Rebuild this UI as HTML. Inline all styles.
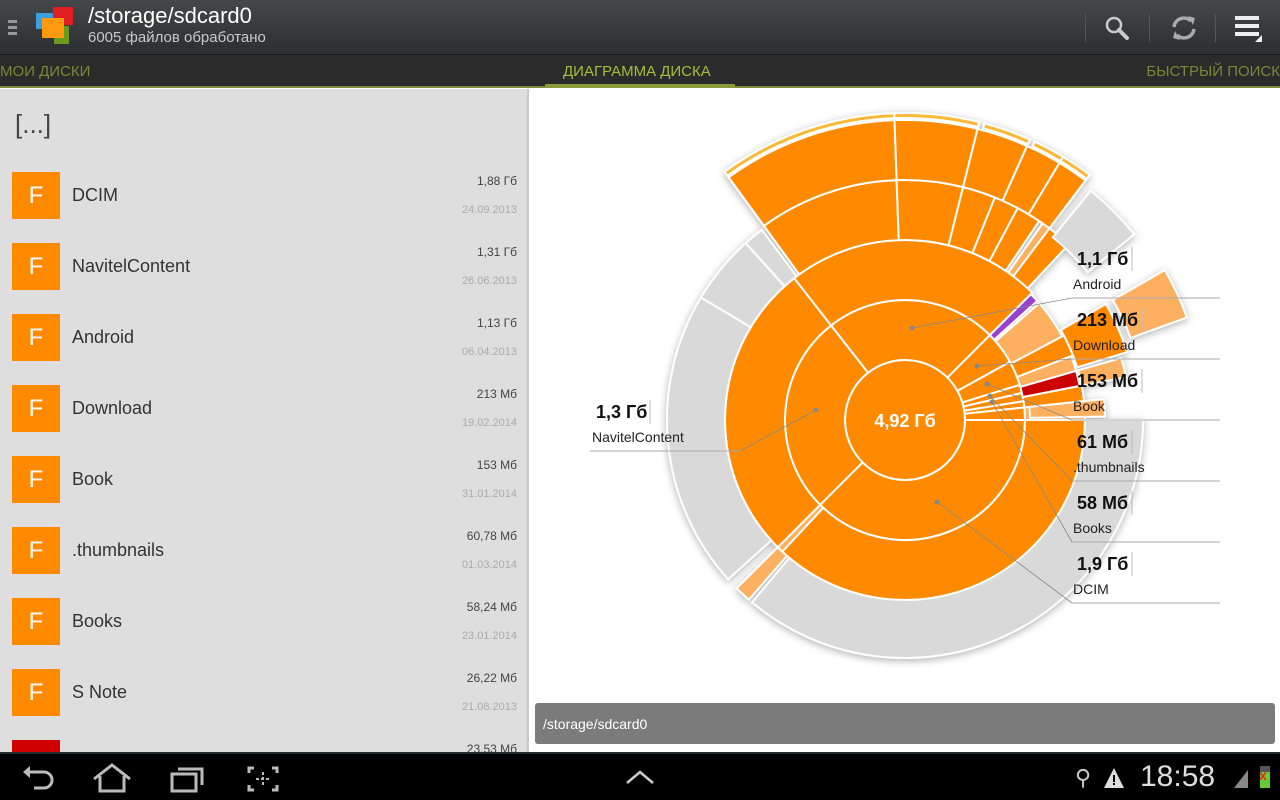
<!DOCTYPE html>
<html><head><meta charset="utf-8">
<style>
*{margin:0;padding:0;box-sizing:border-box}
body{width:1280px;height:800px;overflow:hidden;background:#fff;font-family:"Liberation Sans","DejaVu Sans",sans-serif;position:relative}
#top{position:absolute;left:0;top:0;width:1280px;height:55px;background:linear-gradient(#44484b,#2c2f31);border-bottom:1px solid #1a1a1a}
#tabs{position:absolute;left:0;top:55px;width:1280px;height:33px;background:#2b2b2b;border-bottom:2px solid #7d8a3c}
.tab{position:absolute;top:8px;font-size:15px;color:#7a8638}
#left{position:absolute;left:0;top:89px;width:529px;height:663px;background:#dedede;border-right:2px solid #c8c8c8;overflow:hidden}
.row{position:absolute;left:0;width:528px;height:71px}
.ic{position:absolute;left:12px;top:0;width:48px;height:47px;background:#ff8a00;color:#fff;font-size:24px;text-align:center;line-height:47px}
.nm{position:absolute;left:72px;top:13px;font-size:18px;color:#333}
.sz{position:absolute;right:11px;top:2px;font-size:12px;color:#444}
.dt{position:absolute;right:11px;top:32px;font-size:11px;color:#aaa}
#path{position:absolute;left:535px;top:703px;width:740px;height:41px;background:#7b7b7b;border-radius:3px;color:#fff;font-size:14px;padding:13px 0 0 8px}
#nav{position:absolute;left:0;top:752px;width:1280px;height:48px;background:#000;border-top:2px solid #1e2a2c}
</style></head><body>
<div id="top">
  <div style="position:absolute;left:8px;top:20px;width:9px;height:3px;background:#999;box-shadow:0 6px 0 #999,0 12px 0 #999"></div>
  <div style="position:absolute;left:36px;top:13px;width:18px;height:16px;background:#3a9fe0"></div>
  <div style="position:absolute;left:53px;top:7px;width:20px;height:18px;background:#e02020"></div>
  <div style="position:absolute;left:54px;top:26px;width:15px;height:18px;background:#6a9a20"></div>
  <div style="position:absolute;left:42px;top:18px;width:22px;height:20px;background:#ff9a10"></div>
  <div style="position:absolute;left:88px;top:3px;font-size:22px;color:#fff">/storage/sdcard0</div>
  <div style="position:absolute;left:88px;top:29px;font-size:15px;color:#c8c8c8">6005 файлов обработано</div>
  <div style="position:absolute;left:1085px;top:14px;width:1px;height:28px;background:#555"></div>
  <div style="position:absolute;left:1149px;top:14px;width:1px;height:28px;background:#555"></div>
  <div style="position:absolute;left:1215px;top:14px;width:1px;height:28px;background:#555"></div>
  <svg style="position:absolute;left:1100px;top:12px" width="36" height="30"><circle cx="14" cy="13" r="7" fill="none" stroke="#ccc" stroke-width="2.5"/><line x1="19" y1="18" x2="27" y2="26" stroke="#ccc" stroke-width="4" stroke-linecap="round"/></svg>
  <svg style="position:absolute;left:1168px;top:12px" width="32" height="32"><path d="M6 15 A10 10 0 0 1 23 9" fill="none" stroke="#aaa" stroke-width="3.5"/><path d="M26 17 A10 10 0 0 1 9 23" fill="none" stroke="#aaa" stroke-width="3.5"/><path d="M20 4 L27 6 L25 13 Z" fill="#aaa"/><path d="M12 28 L5 26 L7 19 Z" fill="#aaa"/></svg>
  <div style="position:absolute;left:1235px;top:16px;width:24px;height:4px;background:#eee;box-shadow:0 8px 0 #eee,0 16px 0 #eee"></div>
  <div style="position:absolute;left:1255px;top:35px;width:0;height:0;border-left:7px solid transparent;border-bottom:7px solid #eee"></div>
</div>
<div id="tabs">
  <div class="tab" style="left:0">МОИ ДИСКИ</div>
  <div class="tab" style="left:563px;color:#a4be3a">ДИАГРАММА ДИСКА</div>
  <div style="position:absolute;left:545px;top:29px;width:190px;height:4px;background:#8a9a3c"></div>
  <div class="tab" style="right:0">БЫСТРЫЙ ПОИСК</div>
</div>
<div id="left">
  <div style="position:absolute;left:15px;top:20px;font-size:26px;color:#444">[...]</div>
  <div class="row" style="top:83px"><div class="ic">F</div><div class="nm">DCIM</div><div class="sz">1,88 Гб</div><div class="dt">24.09.2013</div></div>
  <div class="row" style="top:154px"><div class="ic">F</div><div class="nm">NavitelContent</div><div class="sz">1,31 Гб</div><div class="dt">26.06.2013</div></div>
  <div class="row" style="top:225px"><div class="ic">F</div><div class="nm">Android</div><div class="sz">1,13 Гб</div><div class="dt">06.04.2013</div></div>
  <div class="row" style="top:296px"><div class="ic">F</div><div class="nm">Download</div><div class="sz">213 Мб</div><div class="dt">19.02.2014</div></div>
  <div class="row" style="top:367px"><div class="ic">F</div><div class="nm">Book</div><div class="sz">153 Мб</div><div class="dt">31.01.2014</div></div>
  <div class="row" style="top:438px"><div class="ic">F</div><div class="nm">.thumbnails</div><div class="sz">60,78 Мб</div><div class="dt">01.03.2014</div></div>
  <div class="row" style="top:509px"><div class="ic">F</div><div class="nm">Books</div><div class="sz">58,24 Мб</div><div class="dt">23.01.2014</div></div>
  <div class="row" style="top:580px"><div class="ic">F</div><div class="nm">S Note</div><div class="sz">26,22 Мб</div><div class="dt">21.08.2013</div></div>
  <div class="row" style="top:651px"><div class="ic" style="background:#d00000"></div><div class="sz">23,53 Мб</div></div>
</div>
<svg id="chart" style="position:absolute;left:531px;top:89px" width="749" height="612">
<defs><filter id="sh" x="-20%" y="-20%" width="140%" height="140%"><feDropShadow dx="0" dy="2" stdDeviation="4" flood-color="#000" flood-opacity="0.3"/></filter></defs>
<g id="segs" filter="url(#sh)" transform="translate(374,331)"></g>
<g id="lab" font-family="Liberation Sans, sans-serif"></g>
</svg>
<div id="path">/storage/sdcard0</div>
<div id="nav">
  <svg style="position:absolute;left:20px;top:10px" width="40" height="30"><path d="M8 8 H24 A8 8 0 0 1 24 24 H14" fill="none" stroke="#bbb" stroke-width="3"/><path d="M3 8 L10 2 L10 14Z" fill="#bbb"/></svg>
  <svg style="position:absolute;left:90px;top:8px" width="44" height="32"><path d="M4 17 L22 3 L40 17 M10 14 V29 H34 V14" fill="none" stroke="#bbb" stroke-width="3"/></svg>
  <svg style="position:absolute;left:168px;top:10px" width="40" height="30"><rect x="4" y="10" width="24" height="17" fill="none" stroke="#bbb" stroke-width="3"/><path d="M10 5 H34 V21" fill="none" stroke="#bbb" stroke-width="3"/></svg>
  <svg style="position:absolute;left:245px;top:10px" width="40" height="30"><path d="M4 9 V4 H9 M27 4 H32 V9 M32 21 V26 H27 M9 26 H4 V21" fill="none" stroke="#bbb" stroke-width="3"/><path d="M18 8 V22 M11 15 H25" stroke="#bbb" stroke-width="2" stroke-dasharray="3 2"/></svg>
  <svg style="position:absolute;left:622px;top:14px" width="36" height="20"><path d="M5 15 L18 4 L31 15" fill="none" stroke="#ccc" stroke-width="2.5"/></svg>
  <div style="position:absolute;left:1075px;top:11px;color:#ccc;font-size:22px">⚲</div>
  <svg style="position:absolute;left:1102px;top:12px" width="24" height="24"><path d="M12 2 L22 22 H2 Z" fill="#ddd"/><rect x="11" y="9" width="2" height="7" fill="#000"/><rect x="11" y="17" width="2" height="2" fill="#000"/></svg>
  <div style="position:absolute;left:1140px;top:6px;color:#ddd;font-size:30px">18:58</div>
  <svg style="position:absolute;left:1232px;top:12px" width="18" height="24"><path d="M2 22 L16 4 V22Z" fill="#888"/></svg>
  <div style="position:absolute;left:1260px;top:12px;width:10px;height:22px;background:#6c3;border-top:6px solid #555"></div>
  <div style="position:absolute;left:1259px;top:13px;color:#e22;font-size:14px;font-weight:bold">x</div>
</div>
<script>
const O="#ff8a00",L="#fdb060",G="#d9d9d9",Y="#fbb834";
const S=[
[0,60,0,360,O],
[60,120,0,135,O],[60,120,135,232,O],[60,120,232,315,O],[60,120,315,331,O],[60,120,331,343,O],[60,120,343,347,O],[60,120,347,351,O],[60,120,351,354,O],[60,120,354,360,O],
[120,180,0,133,O],[120,180,133,135,L],[120,180,135,232,O],[120,180,232,315,O],[120,178,315,318,"#9a40d0"],[120,178,319,332,L],[120,180,332,339,O],[120,178,339,344,L],[120,178,344,349,"#cc0000"],[120,180,349,354,O],[120,180,354,360,L],
[180,238,0,130,G],[180,238,131,135,L],[180,238,138,211,G],[180,238,211,228,G],[180,238,228,233,G],
[180,240,234,268,O],[180,240,268,284,O],[180,240,284,292,O],[180,240,292,298,O],[180,240,298,304,O],[180,240,305,307,L],[180,240,307,313,O],
[240,300,234,268,O],[240,300,268,284,O],[240,300,284,294,O],[240,300,294,301,O],[240,300,301,307,O],
[302,307,234,268,Y],[302,307,268,284,Y],[302,307,285,294,Y],[302,307,295,301,Y],[302,307,301,307,Y],
[235,295,309,321,G],
[180,232,330,343,O],[240,300,330,340,L],
[180,225,344,349,L],
[125,200,354,359,L]
];
function pt(r,a){a=a*Math.PI/180;return [(r*Math.cos(a)).toFixed(2),(r*Math.sin(a)).toFixed(2)];}
let h="";
for(const [r0,r1,a0,a1,c] of S){
 if(a1-a0>=360){h+=`<circle r="${r1}" fill="${c}" stroke="#fff" stroke-width="2"/>`;continue;}
 const lg=(a1-a0)>180?1:0;
 const p1=pt(r1,a0),p2=pt(r1,a1),p3=pt(r0,a1),p4=pt(r0,a0);
 let d=`M${p1} A${r1} ${r1} 0 ${lg} 1 ${p2} L${p3} `;
 d+= r0>0?`A${r0} ${r0} 0 ${lg} 0 ${p4} Z`:"Z";
 h+=`<path d="${d}" fill="${c}" stroke="#fff" stroke-width="2"/>`;
}
h+=`<text x="0" y="7" text-anchor="middle" fill="#fff" font-size="18" font-weight="bold" font-family="Liberation Sans,sans-serif">4,92 Гб</text>`;
document.getElementById("segs").innerHTML=h;
const X=531,Yo=89;
let l="";
function lab(nx,ny,num,name,lx0,lx1,dot,anchorX){
 l+=`<text x="${nx-X}" y="${ny-Yo}" font-size="18" font-weight="bold" fill="#111">${num}</text>`;
 l+=`<text x="${nx-X-4}" y="${ny-Yo+24}" font-size="14" fill="#222">${name}</text>`;
 l+=`<line x1="${lx0-X}" y1="${ny-Yo+33}" x2="${lx1-X}" y2="${ny-Yo+33}" stroke="#aaa"/>`;
 l+=`<line x1="${anchorX-X}" y1="${ny-Yo-18}" x2="${anchorX-X}" y2="${ny-Yo+6}" stroke="#bbb"/>`;
 l+=`<line x1="${dot[0]-X}" y1="${dot[1]-Yo}" x2="${dot[2]-X}" y2="${ny-Yo+33}" stroke="#888" stroke-width="0.8"/>`;
 l+=`<circle cx="${dot[0]-X}" cy="${dot[1]-Yo}" r="2.5" fill="#888"/>`;
}
lab(1077,265,"1,1 Гб","Android",1072,1220,[912,328,1072],1132);
lab(1077,326,"213 Мб","Download",1072,1220,[977,366,1072],1142);
lab(1077,387,"153 Мб","Book",1072,1220,[987,384,1072],1142);
lab(1077,448,"61 Мб",".thumbnails",1072,1220,[990,396,1072],1132);
lab(1077,509,"58 Мб","Books",1072,1220,[992,402,1072],1132);
lab(1077,570,"1,9 Гб","DCIM",1072,1220,[937,502,1072],1132);
lab(596,418,"1,3 Гб","NavitelContent",590,740,[816,410,740],650);
document.getElementById("lab").innerHTML=l;
</script>
</body></html>
